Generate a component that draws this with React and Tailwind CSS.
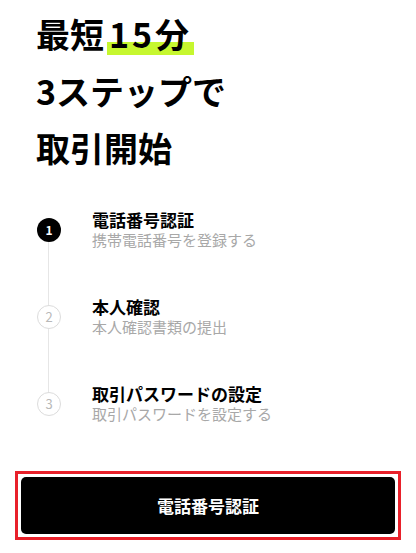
import React from 'react';

const steps = [
    { no: 1, title: '電話番号認証', desc: '携帯電話番号を登録する', active: true },
    { no: 2, title: '本人確認', desc: '本人確認書類の提出', active: false },
    { no: 3, title: '取引パスワードの設定', desc: '取引パスワードを設定する', active: false },
];

const App = () => {
    return (
        <div className="w-[416px] h-[553px] bg-white font-['Noto_Sans_CJK_JP','Noto_Sans',sans-serif] text-black overflow-hidden">
            <h1 className="pt-[5px] pl-[36px] text-[34px] leading-[57px] font-bold">
                <div>
                    最短<span className="ml-[3px] px-[2px] tracking-[3px] bg-[linear-gradient(transparent_33px,#c6f72f_33px,#c6f72f_46px,transparent_46px)]">15分</span>
                </div>
                <div>3ステップで</div>
                <div>取引開始</div>
            </h1>

            <div className="relative mt-[10px] pl-[37px]">
                <div className="absolute left-[48px] top-[43px] h-[174px] w-px bg-[#e6e6e6]" />
                {steps.map((step) => (
                    <div key={step.no} className="flex h-[87px] items-center">
                        <div
                            className={`relative z-10 flex h-[24px] w-[24px] shrink-0 items-center justify-center rounded-full ${
                                step.active
                                    ? 'bg-black text-[12px] font-bold text-white'
                                    : 'border border-[#dcdcdc] bg-white text-[13px] text-[#b8b8b8]'
                            }`}
                        >
                            {step.no}
                        </div>
                        <div className="ml-[31px]">
                            <p className="text-[17px] font-bold leading-[20px]">{step.title}</p>
                            <p className="text-[15px] leading-[19px] text-[#a8a8a8]">{step.desc}</p>
                        </div>
                    </div>
                ))}
            </div>

            <div className="mx-[15px] mt-[24px] border-[3px] border-[#e8202a] p-[3px]">
                <button className="flex h-[57px] w-full items-center justify-center rounded-[5px] bg-black text-[17px] font-bold text-white">
                    電話番号認証
                </button>
            </div>
        </div>
    );
};

export default App;
